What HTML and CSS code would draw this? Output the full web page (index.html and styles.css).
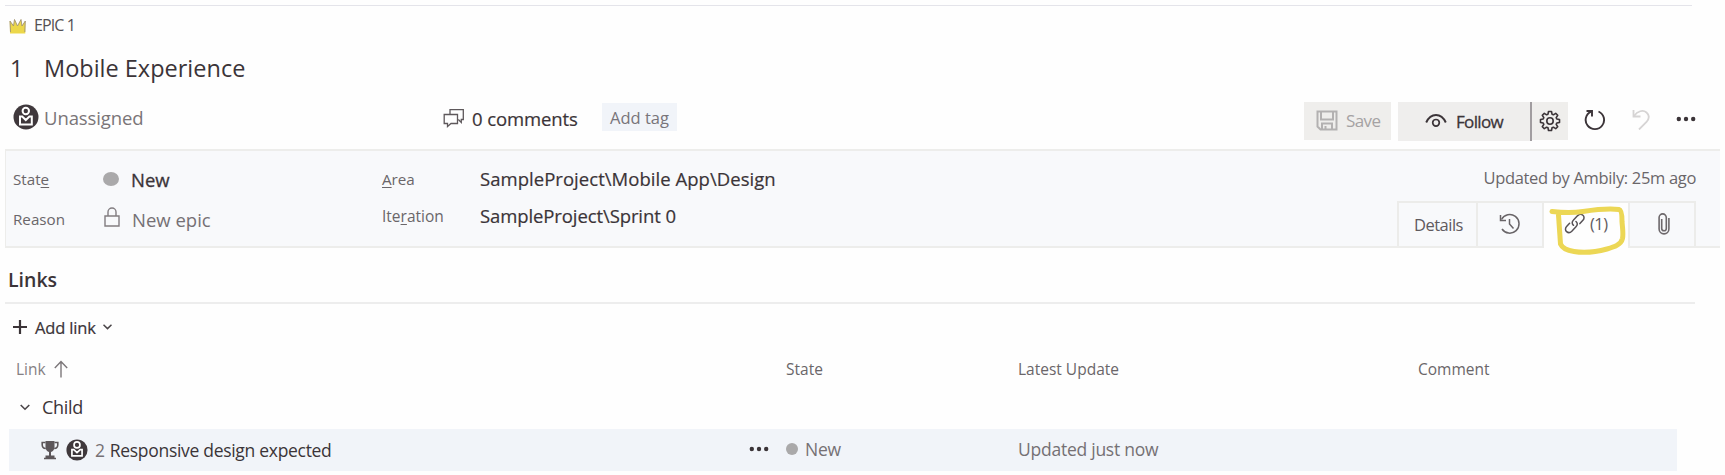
FILE: index.html
```html
<!DOCTYPE html>
<html lang="en">
<head>
<meta charset="utf-8">
<title>Epic 1 - Mobile Experience</title>
<link rel="stylesheet" href="styles.css">
</head>
<body>
<main class="work-item">
  <div class="type-row">
    <svg class="crown" width="17" height="16" viewBox="0 0 17 16"><path d="M1 15.500L.8 3l3.700 5L5.500 1.500l3 6.500L12 1.500l1 6.500L16.300 3v12.500z" fill="#ecd74a"/><path d="M1.500 14L1 3l3.500 5L5.500 1.500l3 6.500L12 1.500l1 6.500L16.300 3l-.5 11" fill="none" stroke="#a2936f" stroke-width=".9"/></svg>
    <span class="type-name">EPIC 1</span>
  </div>
  <div class="title-row">
    <span class="item-id">1</span>
    <h1 class="item-title">Mobile Experience</h1>
  </div>
  <div class="toolbar">
    <div class="assignee">
      <svg width="26" height="26" viewBox="0 0 26 26"><circle cx="13" cy="13" r="12.500" fill="#3f383c"/><circle cx="12.800" cy="7" r="3.200" fill="none" stroke="#fff" stroke-width="2"/><path d="M7 12.500h2.200l3.600 3.500 3.600-3.500h2.400v8H7z" fill="none" stroke="#fff" stroke-width="2"/></svg>
      <span class="assignee-name">Unassigned</span>
    </div>
    <div class="comments">
      <svg width="22" height="20" viewBox="0 0 22 20" fill="none" stroke="#5e585b" stroke-width="1.300"><path d="M7 6V1.700h13.300v9.800h-2v3l-3-3"/><path d="M1.200 6.500H14.500v9H8l-3.500 3v-3H1.200z"/></svg>
      <span class="comments-count">0 comments</span>
    </div>
    <span class="add-tag">Add tag</span>
    <div class="actions">
      <div class="save">
        <svg width="22" height="21" viewBox="0 0 22 21" fill="none" stroke="#b3b1b1" stroke-width="2"><path d="M1.500 1.500h19v18H4.500l-3-3zM5 1.500v8h12v-8M6 19.500v-6h10v6M9.500 16v3.500"/></svg>
        <span class="save-text">Save</span>
      </div>
      <div class="follow">
        <svg width="22" height="15" viewBox="0 0 22 15" fill="none" stroke="#3b3438"><path d="M1.200 9.500C3.500 4.500 7 2 11 2s7.500 2.500 9.800 7.500" stroke-width="1.900"/><circle cx="11" cy="9.800" r="3.300" stroke-width="1.700"/></svg>
        <span class="follow-text">Follow</span>
      </div>
      <div class="settings">
        <svg width="22" height="22" viewBox="0 0 22 22" fill="none" stroke="#3b3438" stroke-width="1.600" stroke-linejoin="round"><path d="M9.500 1.500h3l.5 2.700 1.400.6 2.300-1.500 2 2-1.500 2.300.6 1.400 2.700.5v3l-2.700.5-.6 1.400 1.500 2.300-2 2-2.300-1.500-1.400.6-.5 2.700h-3L9 17.800l-1.400-.6-2.300 1.500-2-2 1.500-2.300-.6-1.400-2.700-.5v-3l2.700-.5.6-1.400-1.500-2.300 2-2 2.300 1.500L9 4.200z"/><circle cx="11" cy="11" r="3.200"/></svg>
      </div>
      <svg class="refresh" width="22" height="22" viewBox="0 0 22 22" fill="none" stroke="#3b3438" stroke-width="1.900"><path d="M14.500 2.500A9.200 9.200 0 1 1 7 2.600"/><path d="M2.500 2h5.500v5.500"/></svg>
      <svg class="undo" width="18" height="21" viewBox="0 0 18 21" fill="none" stroke="#d6d4d4" stroke-width="1.800"><path d="M1.500 1v6.500h7"/><path d="M2 7C5.500 2 11 .5 14.500 3.500s2.500 6.500 0 9.500L7 20.500"/></svg>
      <svg class="more" width="20" height="6" viewBox="0 0 20 6" fill="#3b3438"><circle cx="2.800" cy="3" r="2.200"/><circle cx="10" cy="3" r="2.200"/><circle cx="17.200" cy="3" r="2.200"/></svg>
    </div>
  </div>

  <section class="panel">
    <dl class="fields">
      <dt class="label"><span>Stat<u>e</u></span></dt>
      <dd class="value v-state"><i class="dot"></i><span>New</span></dd>
      <dt class="label"><span><u>A</u>rea</span></dt>
      <dd class="value v-area"><span>SampleProject\Mobile App\Design</span></dd>
      <dt class="label l-reason"><span>Reason</span></dt>
      <dd class="value v-reason"><svg width="16" height="20" viewBox="0 0 16 20" fill="none" stroke="#827d80" stroke-width="1.400"><path d="M1 9h14v10H1zM4 9V5a4 4 0 0 1 8 0v4"/></svg><span>New epic</span></dd>
      <dt class="label l-iter"><span>Ite<u>r</u>ation</span></dt>
      <dd class="value v-iter"><span>SampleProject\Sprint 0</span></dd>
    </dl>
    <div class="side">
      <div class="updated"><span>Updated by Ambily: 25m ago</span></div>
      <nav class="tabs">
        <div class="tab tab-details"><span>Details</span></div>
        <div class="tab tab-history"><svg width="22" height="22" viewBox="0 0 22 22" fill="none" stroke="#686467" stroke-width="1.500"><path d="M2.500 6.500A9.300 9.300 0 1 1 3 16"/><path d="M1.500 2v5.500H7M10.500 6v5l4 4.500"/></svg></div>
        <div class="tab tab-links"><svg width="22" height="21" viewBox="0 0 22 21" fill="none" stroke="#565155" stroke-width="1.500" stroke-linecap="round"><path d="M9.500 12.300c-1.800-1.500-1.600-3.600-.2-5l4.400-4.700c1.600-1.600 3.700-1.700 5.200-.4s1.500 3.500 0 5.100l-3 3.300"/><path d="M12 8.500c1.800 1.500 1.600 3.600.2 5l-4.400 4.700c-1.600 1.600-3.700 1.700-5.200.4s-1.500-3.500 0-5.100l3-3.300"/></svg><span>(1)</span>
          <svg class="marker" width="84" height="54" viewBox="0 0 84 54" fill="none" stroke="#ecd755" stroke-width="5" stroke-linecap="round" stroke-linejoin="round"><path d="M5 8.500C14 9.500 26 10 36 8.500S60 5 72 6.500c2.500.5 3 6 3 12 .5 7 1.500 12 .5 17C74 42 67 44 60 46c-11 3-24 4-33 2.500-7-1-12-4-13.500-7.500L11.500 12"/></svg>
        </div>
        <div class="tab tab-attach"><svg width="12" height="22" viewBox="0 0 12 22" fill="none" stroke="#6d686b" stroke-width="1.600"><path d="M3.700 6v9.500a2.300 2.300 0 0 0 4.600 0V4.500a3.500 3.500 0 0 0-7.200 0V16a4.900 4.900 0 0 0 9.800 0V5"/></svg></div>
      </nav>
    </div>
  </section>

  <h2 class="links-title">Links</h2>
  <div class="add-link">
    <svg width="14" height="14" viewBox="0 0 14 14" stroke="#3b3438" stroke-width="2.200"><path d="M7 0v14M0 7h14"/></svg>
    <span class="add-link-text">Add link</span>
    <svg width="9" height="6" viewBox="0 0 9 6" fill="none" stroke="#4b4649" stroke-width="1.500"><path d="M.5.8l4 3.800 4-3.800"/></svg>
  </div>
  <div class="grid-row head">
    <div class="c-link"><span>Link</span><svg width="14" height="18" viewBox="0 0 14 18" fill="none" stroke="#7c777a" stroke-width="1.400"><path d="M7 17.500V1.500M.8 8L7 1.500 13.200 8"/></svg></div>
    <div class="c-state">State</div>
    <div class="c-update">Latest Update</div>
    <div class="c-comment">Comment</div>
  </div>
  <div class="group">
    <svg width="10" height="7" viewBox="0 0 10 7" fill="none" stroke="#4b4649" stroke-width="1.600"><path d="M.7 1l4.300 4.200L9.300 1"/></svg>
    <span class="group-name">Child</span>
  </div>
  <div class="grid-row item">
    <div class="c-link">
      <svg class="trophy" width="18" height="20" viewBox="0 0 18 20"><path d="M4.500 1h9v6c0 3-2 4.500-3.500 5v3.500h3.500V19h-9v-3.500H8V12C6.500 11.500 4.500 10 4.500 7z" fill="#5c565a"/><path d="M4.500 2.500H1.200v2.200c0 2 1.300 3.600 3.600 3.800M13.500 2.500h3.300v2.200c0 2-1.300 3.600-3.600 3.800M3 18.500h12" fill="none" stroke="#5c565a" stroke-width="1.600"/></svg>
      <svg class="avatar" width="22" height="22" viewBox="0 0 26 26"><circle cx="13" cy="13" r="12.500" fill="#3f383c"/><circle cx="13" cy="7" r="3.500" fill="none" stroke="#fff" stroke-width="2"/><path d="M7 12.500h2.200L13 16l3.800-3.500H19V20H7z" fill="none" stroke="#fff" stroke-width="2"/></svg>
      <span class="child-id">2</span><span class="child-title">Responsive design expected</span>
      <svg class="row-more" width="20" height="6" viewBox="0 0 20 6" fill="#3b3438"><circle cx="2.800" cy="3" r="2.200"/><circle cx="10" cy="3" r="2.200"/><circle cx="17.200" cy="3" r="2.200"/></svg>
    </div>
    <div class="c-state"><i class="dot"></i><span>New</span></div>
    <div class="c-update">Updated just now</div>
    <div class="c-comment"></div>
  </div>
</main>
</body>
</html>
```
FILE: styles.css
```css
body {
  margin: 0;
  background: #fefefe;
  font-family: "Open Sans", "Noto Sans", sans-serif;
  color: #3b3438;
}
.work-item { box-sizing: border-box; width: 1725px; height: 475px; padding: 5px 5px 0; overflow: hidden; white-space: nowrap; }
svg { display: block; flex: none; }
h1, h2, dl, dd, dt { margin: 0; font-weight: 400; }
u { text-underline-offset: 2px; }

.type-row { display: flex; align-items: center; width: 1687px; height: 38px; border-top: 1px solid #e4e4ea; padding-left: 4px; box-sizing: border-box; }
.type-name { margin-left: 8px; font-size: 16px; letter-spacing: -0.9px; color: #555053; }
.crown { margin-top: 3px; }
.title-row { display: flex; align-items: center; height: 50px; padding-left: 5px; }
.item-id { width: 34px; font-size: 23px; }
.item-title { font-size: 23.5px; }

.toolbar { display: flex; align-items: flex-start; height: 56px; }
.assignee { display: flex; align-items: center; width: 430px; height: 26px; margin: 11px 0 0 8px; }
.assignee-name { margin-left: 5px; font-size: 18.5px; letter-spacing: -0.1px; color: #7a7578; }
.comments { display: flex; align-items: center; width: 159px; height: 26px; margin-top: 12px; }
.comments-count { margin-left: 7px; font-size: 18.5px; letter-spacing: -0.1px; -webkit-text-stroke: 0.2px; }
.add-tag { display: flex; align-items: center; width: 75px; height: 28px; padding: 1px 0 0 8px; margin-top: 10px; box-sizing: border-box; background: #f1f4f9; font-size: 16.5px; color: #78747a; }
.actions { display: flex; align-items: flex-start; margin: 9px 0 0 627px; }
.save { display: flex; align-items: center; width: 87px; height: 38px; padding: 0 0 2px 12px; box-sizing: border-box; background: #efeeec; color: #a5a2a3; }
.save-text { margin-left: 8px; font-size: 17px; letter-spacing: -0.6px; }
.follow { display: flex; align-items: center; width: 134px; height: 39px; margin-left: 7px; padding-left: 27px; box-sizing: border-box; background: #efeeed; border-right: 2px solid #a19da0; }
.follow svg { margin-bottom: 3px; }
.follow-text { margin-left: 9px; font-size: 17px; letter-spacing: -0.65px; -webkit-text-stroke: 0.3px; }
.settings { display: flex; align-items: center; justify-content: center; width: 36px; height: 38px; background: #efeeec; }
.refresh { margin: 7px 0 0 16px; }
.undo { margin: 7px 0 0 26px; }
.more { margin: 14px 0 0 26px; }

.panel { display: flex; justify-content: space-between; box-sizing: border-box; width: 1715px; height: 99px; border: solid #ededeb; border-width: 2px 0 2px 1px; background: #f8f9fb; }
.fields { display: grid; grid-template-columns: 90px 279px 98px 400px; grid-template-rows: 38px 37px; padding: 9px 0 0 7px; }
.fields > * { display: flex; align-items: center; }
.label { font-size: 15.2px; color: #6a6669; }
.value { font-size: 18.5px; }
.v-state .dot { width: 16px; height: 14px; margin-right: 12px; }
.v-state span { -webkit-text-stroke: 0.3px; }
.v-area { padding-bottom: 2px; letter-spacing: 0.04px; -webkit-text-stroke: 0.2px; }
.v-iter { padding-bottom: 3px; letter-spacing: -0.1px; -webkit-text-stroke: 0.2px; }
.l-iter { padding-bottom: 2px; font-size: 15.5px; }
.l-reason { padding-top: 5px; }
.v-reason { padding-top: 5px; color: #757074; }
.v-reason svg { margin: 0 12px 5px 1px; }
.dot { display: block; flex: none; border-radius: 50%; background: #aaa9aa; }
.side { width: 323px; padding-top: 11px; }
.updated { display: flex; justify-content: flex-end; width: 299px; height: 39px; line-height: 32px; font-size: 16.5px; letter-spacing: -0.33px; color: #6a6669; }
.tabs { display: flex; width: 299px; height: 47px; }
.tab { display: flex; align-items: center; box-sizing: border-box; border: solid #ececea; border-width: 2px 0 0 2px; font-size: 16.5px; letter-spacing: -0.5px; color: #5f5a5e; height: 45px; padding-bottom: 1px; }
.tab-details { width: 79px; padding-left: 15px; }
.tab-history { width: 66px; padding-left: 21px; }
.tab-links { position: relative; width: 86px; height: 47px; padding: 0 0 4px 20px; background: #fefefe; }
.tab-links span { margin-left: 4px; }
.tab-attach { width: 68px; padding-left: 28px; border-right-width: 2px; }
.marker { position: absolute; left: 3px; top: 0; }

.links-title { box-sizing: border-box; width: 1690px; height: 56px; padding: 16px 0 0 3px; border-bottom: 2px solid #ededed; font-size: 19.5px; font-weight: 600; line-height: 32px; }
.add-link { display: flex; align-items: center; height: 46px; padding-left: 8px; }
.add-link-text { margin: 0 7px 0 8px; font-size: 16.5px; letter-spacing: -0.15px; -webkit-text-stroke: 0.2px; }
.grid-row { display: grid; grid-template-columns: 776px 232px 400px 1fr; align-items: center; }
.grid-row > div { display: flex; align-items: center; }
.head { height: 38px; padding-left: 5px; font-size: 15.5px; color: #6a6669; }
.head .c-link { padding-left: 6px; color: #858083; }
.head .c-link svg { margin-left: 8px; }
.group { display: flex; align-items: center; box-sizing: border-box; height: 41px; padding: 0 0 3px 15px; }
.group-name { margin-left: 12px; font-size: 18px; letter-spacing: -0.3px; }
.item { box-sizing: border-box; width: 1668px; height: 42px; margin-left: 4px; padding-left: 1px; background: #f1f4f9; font-size: 17.5px; letter-spacing: -0.25px; color: #757074; }
.item .c-state, .item .c-update { padding-bottom: 2px; }
.trophy { margin-left: 31px; }
.avatar { margin-left: 7px; }
.child-id { margin-left: 7px; }
.child-title { margin-left: 5px; letter-spacing: -0.3px; color: #3b3438; }
.row-more { margin: 0 17px 2px auto; }
.item .dot { width: 12px; height: 12px; margin-right: 7px; }
```
